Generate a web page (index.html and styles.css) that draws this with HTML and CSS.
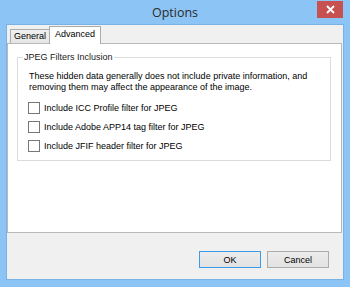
FILE: index.html
```html
<!DOCTYPE html>
<html lang="en">
<head>
    <meta charset="UTF-8">
    <title>Options</title>
    <link rel="stylesheet" href="styles.css">
</head>
<body>
    <div class="window">
        <div class="titlebar">
            <span></span>
            <h1>Options</h1>
            <button class="close-btn">
                <svg width="9" height="9" viewBox="0 0 9 9"><path d="M1 1L8 8M8 1L1 8" stroke="#fff" stroke-width="1.8"/></svg>
            </button>
        </div>

        <div class="client">
            <div class="tabs">
                <div class="tab">General</div>
                <div class="tab active">Advanced</div>
            </div>

            <div class="tab-page">
                <fieldset class="group">
                    <legend>JPEG Filters Inclusion</legend>
                    <p class="note">These hidden data generally does not include private information, and removing them may affect the appearance of the image.</p>
                    <ul class="options">
                        <li><span class="check"></span>Include ICC Profile filter for JPEG</li>
                        <li><span class="check"></span>Include Adobe APP14 tag filter for JPEG</li>
                        <li><span class="check"></span>Include JFIF header filter for JPEG</li>
                    </ul>
                </fieldset>
            </div>

            <div class="buttons">
                <button class="btn default">OK</button>
                <button class="btn">Cancel</button>
            </div>
        </div>
    </div>
</body>
</html>
```

FILE: styles.css
```css
body {
    margin: 0;
    padding: 0;
    font-family: 'Liberation Sans', Arial, sans-serif;
    font-size: 9px;
    color: #000;
}

.window {
    width: 350px;
    height: 287px;
    box-sizing: border-box;
    background-color: #8cc4f5;
    padding: 0 6px 7px 6px;
    display: flex;
    flex-direction: column;
}

.titlebar {
    height: 24px;
    display: grid;
    grid-template-columns: 1fr auto 1fr;
    align-items: start;
}

.titlebar h1 {
    margin: 0;
    font-family: 'Open Sans', sans-serif;
    font-weight: 400;
    font-size: 12.5px;
    line-height: 26px;
    color: #2b2b2b;
}

.close-btn {
    justify-self: end;
    width: 26px;
    height: 17px;
    margin: 1px 1px 0 0;
    padding: 0;
    border: none;
    background-color: #c75050;
    display: flex;
    align-items: center;
    justify-content: center;
}

.client {
    flex: 1;
    background-color: #f0f0f0;
    border: 1px solid #79b2e6;
    display: flex;
    flex-direction: column;
}

.tabs {
    height: 18px;
    display: flex;
    align-items: flex-end;
    padding-left: 3px;
    position: relative;
    z-index: 2;
}

.tab {
    height: 13px;
    padding: 0 3px;
    border: 1px solid #acacac;
    border-bottom: none;
    background: linear-gradient(#f0f0f0, #e5e5e5);
    line-height: 13px;
    margin-bottom: 0;
}

.tab.active {
    height: 17px;
    padding: 0 5px;
    margin-left: -1px;
    margin-bottom: -1px;
    background: #fff;
    line-height: 15px;
}

.tab-page {
    height: 190px;
    box-sizing: border-box;
    margin-right: 1px;
    background-color: #fff;
    border: 1px solid #b9b9b9;
    padding: 8px 10px 0 9px;
}

.group {
    margin: 0;
    padding: 0 0 5px 11px;
    border: 1px solid #dcdcdc;
}

.group legend {
    margin-left: -6px;
    padding: 0 1px;
    line-height: 11px;
    color: #1a1a1a;
}

.note {
    margin: 8px 0 6px 0;
    line-height: 10.5px;
    width: 290px;
}

.options {
    list-style: none;
    margin: 0;
    padding: 0 0 0 0;
}

.options li {
    height: 19px;
    display: flex;
    align-items: center;
    margin-left: -1px;
}

.check {
    width: 10px;
    height: 10px;
    border: 1px solid #777;
    background: #fff;
    margin-right: 4px;
}

.buttons {
    flex: 1;
    display: flex;
    justify-content: flex-end;
    align-items: flex-start;
    gap: 6px;
    padding: 18px 14px 0 0;
}

.btn {
    width: 62px;
    height: 17px;
    padding: 0;
    font-family: 'Liberation Sans', Arial, sans-serif;
    font-size: 9px;
    color: #000;
    background: linear-gradient(#ececec, #e2e2e2);
    border: 1px solid #acacac;
}

.btn.default {
    border-color: #3c9be8;
}
```
